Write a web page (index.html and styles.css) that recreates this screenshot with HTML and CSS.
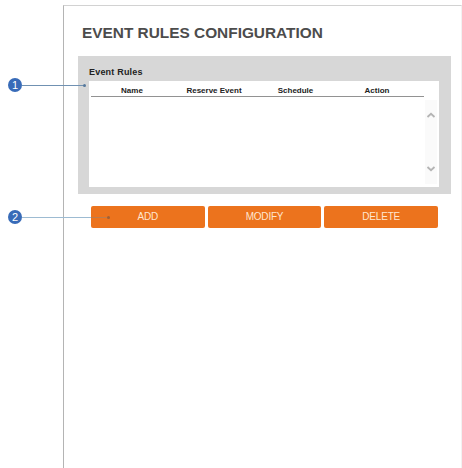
FILE: index.html
```
<!DOCTYPE html>
<html lang="en">
<head>
	<meta charset="UTF-8">
	<title>Event Rules Configuration</title>
	<link rel="stylesheet" href="styles.css">
</head>
<body>
	<div class="page">
		<h1>EVENT RULES CONFIGURATION</h1>
		<div class="panel">
			<h2>Event Rules</h2>
			<div class="list">
				<ul class="head">
					<li>Name</li>
					<li>Reserve Event</li>
					<li>Schedule</li>
					<li>Action</li>
				</ul>
				<div class="scroll">
					<svg width="10" height="6" viewBox="0 0 10 6"><path d="M1.5 5L5 1.8L8.5 5"/></svg>
					<svg width="10" height="6" viewBox="0 0 10 6"><path d="M1.5 1L5 4.2L8.5 1"/></svg>
				</div>
			</div>
		</div>
		<div class="buttons">
			<a>ADD</a>
			<a>MODIFY</a>
			<a>DELETE</a>
		</div>
	</div>
	<div class="callout callout-1"><b>1</b><i></i></div>
	<div class="callout callout-2"><b>2</b><i></i></div>
</body>
</html>
```
FILE: styles.css
```
body,h1,h2,ul{
	margin: 0;
	padding: 0;
}
body{
	position: relative;
	height: 468px;
	overflow: hidden;
	background: #fff;
	font-family: "Liberation Sans", Arial, sans-serif;
}
ul{
	list-style-type: none;
}
.page{
	box-sizing: border-box;
	height: 463px;
	margin: 5px 0 0 63px;
	padding: 15px 11px 0 14px;
	border-top: 1px solid #d2d2d2;
	border-left: 1px solid #b4b4b4;
	border-right: 1px solid #f2f2f2;
}
h1{
	height: 35px;
	padding-left: 4px;
	font-size: 15.4px;
	line-height: 23px;
	color: #4c4c4c;
	white-space: nowrap;
}
.panel{
	box-sizing: border-box;
	width: 373px;
	height: 138px;
	padding: 7px 12px 7px 11px;
	background: #d7d7d7;
}
h2{
	height: 18px;
	font-size: 9px;
	line-height: 18px;
	letter-spacing: .2px;
	color: #222;
}
.list{
	display: flex;
	justify-content: space-between;
	height: 106px;
	background: #fff;
}
.head{
	display: grid;
	grid-template-columns: 82px 82px 81px 88px;
	height: 15px;
	margin-left: 2px;
	border-bottom: 1px solid #929292;
	font-size: 8px;
	font-weight: bold;
	line-height: 19px;
	text-align: center;
	white-space: nowrap;
	color: #222;
}
.head li:last-child{
	padding-right: 6px;
}
.scroll{
	display: flex;
	flex-direction: column;
	justify-content: space-between;
	align-items: center;
	width: 12px;
	margin: 19px 2px 3px 0;
	padding: 12px 0;
	background: #fafafa;
}
.scroll path{
	fill: none;
	stroke: #b4b4b4;
	stroke-width: 1.8;
}
.buttons{
	display: flex;
	gap: 3px;
	margin: 12px 0 0 13px;
	width: 347px;
}
.buttons a{
	flex: 1;
	height: 22px;
	border-radius: 2px;
	background: #ec731d;
	font-size: 10px;
	line-height: 22px;
	letter-spacing: -.2px;
	text-align: center;
	color: #ffe6cf;
}
/* numbered markers lie over the page, their lines end on the item */
.callout{
	position: absolute;
	left: 8px;
	display: flex;
	align-items: center;
}
.callout b{
	width: 14px;
	height: 14px;
	border-radius: 50%;
	background: #386bb8;
	font-size: 11px;
	font-weight: normal;
	line-height: 14px;
	text-align: center;
	color: #fff;
}
.callout i{
	position: relative;
	width: 63px;
	height: 1px;
	background: #7091b2;
}
.callout i::after{
	content: "";
	position: absolute;
	right: -1px;
	top: -1px;
	width: 3px;
	height: 3px;
	border-radius: 50%;
	background: #56789c;
}
.callout-1{
	top: 78px;
}
.callout-2{
	top: 210px;
}
.callout-2 i{
	width: 87px;
	background: linear-gradient(to right, #9dbbd2 69px, #bd7c4c 69px);
}
.callout-2 i::after{
	background: #a06035;
}
```
